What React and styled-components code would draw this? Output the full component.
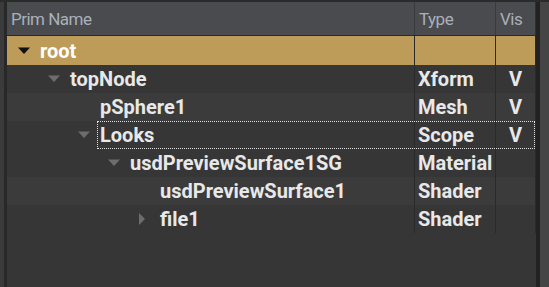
import React from 'react';
import styled, { createGlobalStyle } from 'styled-components';

const GlobalStyle = createGlobalStyle`
  html, body {
    margin: 0;
    padding: 0;
    background: #3c3c3c;
    overflow: hidden;
  }
  body {
    font-family: Roboto, "Liberation Sans", sans-serif;
  }
`;

// light: rows drawn with the lighter band colour in the reference
const rows = [
  { name: 'root', type: '', vis: '', depth: 0, arrow: 'down', selected: true },
  { name: 'topNode', type: 'Xform', vis: 'V', depth: 1, arrow: 'down' },
  { name: 'pSphere1', type: 'Mesh', vis: 'V', depth: 2, light: true },
  { name: 'Looks', type: 'Scope', vis: 'V', depth: 2, arrow: 'down', focused: true },
  { name: 'usdPreviewSurface1SG', type: 'Material', vis: '', depth: 3, arrow: 'down' },
  { name: 'usdPreviewSurface1', type: 'Shader', vis: '', depth: 4, light: true },
  { name: 'file1', type: 'Shader', vis: '', depth: 4, arrow: 'right' },
];

export default function App() {
  return (
    <>
      <GlobalStyle />
      <Window>
        <TopEdge />
        <Body>
          <Gutter />
          <Panel>
            <Header>
              <HeadCell>Prim Name</HeadCell>
              <HeadCell>Type</HeadCell>
              <HeadCell>Vis</HeadCell>
            </Header>
            {rows.map((r) => (
              <Row key={r.name} $selected={r.selected} $light={r.light}>
                <NameCell $depth={r.depth}>
                  <Arrow dir={r.arrow} dark={r.selected} />
                  <Label $selected={r.selected}>{r.name}</Label>
                </NameCell>
                <Cell>{r.type}</Cell>
                <Cell $center>{r.vis}</Cell>
                {r.focused && <FocusRect />}
              </Row>
            ))}
          </Panel>
          <ScrollStrip />
        </Body>
      </Window>
    </>
  );
}

function Arrow({ dir, dark }) {
  const color = dark ? '#111111' : '#6d6d6d';
  if (!dir) return <ArrowBox />;
  return (
    <ArrowBox>
      {dir === 'down' ? (
        <svg width="12" height="8" viewBox="0 0 12 8">
          <polygon points="0,0.5 12,0.5 6,7" fill={color} />
        </svg>
      ) : (
        <svg width="8" height="12" viewBox="0 0 8 12">
          <polygon points="1,0 7,6 1,12" fill={color} />
        </svg>
      )}
    </ArrowBox>
  );
}

const Window = styled.div`
  display: flex;
  flex-direction: column;
  width: 549px;
  height: 287px;
  background: #3c3c3c;
`;

const TopEdge = styled.div`
  height: 2px;
  background: #2b2b2b;
`;

const Body = styled.div`
  flex: 1;
  display: flex;
`;

const Gutter = styled.div`
  width: 4px;
  background: #3b3b3b;
  border-right: 3px solid #282828;
`;

const Panel = styled.div`
  width: 529px;
  background: #363636;
  display: flex;
  flex-direction: column;
`;

const ScrollStrip = styled.div`
  width: 9px;
  background: #454545;
  border-left: 4px solid #222222;
`;

const Header = styled.div`
  display: grid;
  grid-template-columns: 408px 81px 40px;
  height: 33px;
  background: #4a4b4f;
  border-bottom: 1px solid #2a2a2c;
`;

const HeadCell = styled.div`
  display: flex;
  align-items: center;
  padding: 1px 0 0 4px;
  font-size: 17px;
  letter-spacing: -0.5px;
  color: #a9b0b8;
  border-right: 1px solid #3a3b3e;

  &:last-child {
    border-right: 1px solid #2e2f32;
  }
`;

const Row = styled.div`
  position: relative;
  display: grid;
  grid-template-columns: 408px 81px 40px;
  height: ${(p) => (p.$selected ? 29 : 28)}px;
  background: ${(p) => (p.$selected ? '#bd9b58' : p.$light ? '#3b3b3b' : '#363636')};
  color: #e8e8e8;
  font-size: 20px;
  font-weight: 700;
`;

const NameCell = styled.div`
  display: flex;
  align-items: center;
  padding-left: ${(p) => 10 + p.$depth * 30}px;
  border-right: 1px solid #2a2a2a;
`;

const ArrowBox = styled.div`
  width: 23px;
  height: 100%;
  padding-left: 1px;
  display: flex;
  align-items: center;
  box-sizing: border-box;
`;

const Label = styled.span`
  white-space: nowrap;
  color: ${(p) => (p.$selected ? '#ffffff' : 'inherit')};
`;

const Cell = styled.div`
  display: flex;
  align-items: center;
  justify-content: ${(p) => (p.$center ? 'center' : 'flex-start')};
  padding-left: ${(p) => (p.$center ? '0' : '3px')};
  border-right: 1px solid #2a2a2a;
  white-space: nowrap;
`;

const FocusRect = styled.div`
  position: absolute;
  left: 90px;
  right: 1px;
  top: 0;
  bottom: 0;
  border: 1px dotted #e0e0e0;
  pointer-events: none;
`;
